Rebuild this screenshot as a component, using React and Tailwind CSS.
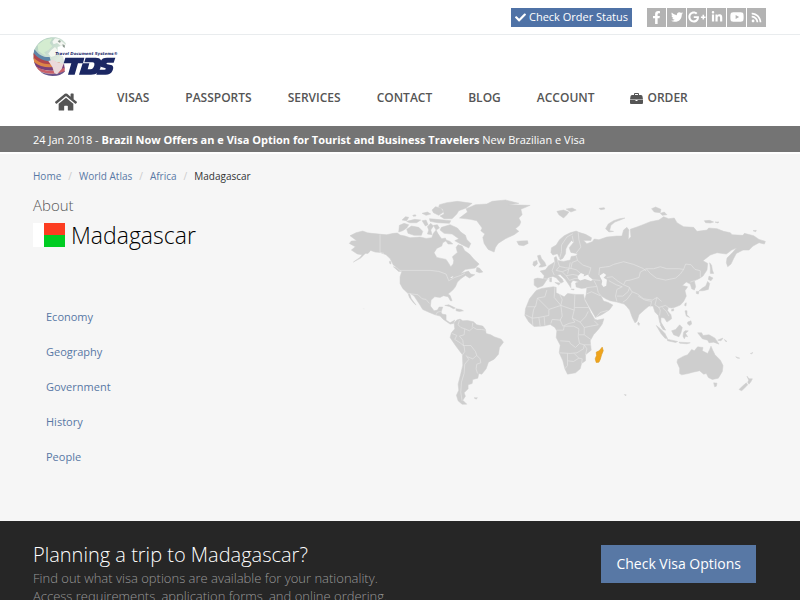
import React from "react";
import {
  FaCheck,
  FaFacebookF,
  FaTwitter,
  FaGooglePlusG,
  FaLinkedinIn,
  FaYoutube,
  FaRss,
  FaHome,
} from "react-icons/fa";

// Each region of the map is plotted on its own sheet; a sheet has an offset on the world grid.
const SHEETS = {
  world: [0, 0],
  atlantic: [390, 0],
  siberia: [780, 0],
  south: [270, 300],
  pacific: [810, 270],
  central: [150, 240],
  europe: [540, 105],
};

function outline(...parts) {
  const points = [];
  for (const [sheet, coords] of parts) {
    const [dx, dy] = SHEETS[sheet];
    for (const pair of coords.split(" ")) {
      const [x, y] = pair.split(",").map(Number);
      points.push(`${x + dx} ${y + dy}`);
    }
  }
  return "M" + points.join("L");
}

const NORTH_AMERICA = outline(
  ["world", "30,137 48,128 68,123 82,128 95,130 125,133 140,134 160,130 172,129 180,135 195,138 210,143 240,141 258,145 275,143 280,130 288,120 293,130 300,140 305,146 316,144 318,152 308,158 305,168 290,175 282,188 290,202 318,208 326,220 332,230 339,222 341,212 337,200 352,187 348,172 354,164 366,168 374,182 388,192 402,208 417,222 405,234 375,238 362,250 385,243 392,252 404,254 388,264 376,256 362,266 352,276 346,290 338,300 324,312"],
  ["central", "180,76 186,92 181,92 174,80 160,77 150,82 134,80 123,90 121,108 132,122 142,120 147,111 158,111 153,126 156,132 168,134 168,150 180,158 194,150 190,160 180,162 160,148 150,138 135,134 120,128 98,118 88,102 72,78 58,68 64,86 78,105 70,98 58,82 54,70 38,55 30,40 30,20 35,5"],
  ["world", "172,234 160,225 150,205 138,194 120,187 105,186 92,181 84,190 76,190 62,204 40,216 60,202 66,194 52,192 34,180 46,170 28,160 34,153 50,152"]
);

const SOUTH_AMERICA = outline([
  "south",
  "72,98 80,90 90,87 98,92 112,91 130,95 140,104 158,108 166,118 168,130 182,134 192,140 213,147 220,156 208,172 205,192 192,207 175,216 168,236 155,252 146,250 143,264 128,268 126,280 114,284 114,296 102,308 106,318 98,330 110,342 96,342 84,332 79,315 86,300 84,282 91,255 98,225 97,194 85,178 72,160 60,142 64,128 74,116",
]);

const AFRICA = outline([
  "south",
  "318,1 335,-5 370,-10 378,-8 378,8 386,12 402,20 412,10 436,13 460,13 463,30 474,50 482,68 494,88 502,90 521,86 516,102 506,116 490,134 480,152 483,180 466,194 466,212 454,220 450,236 436,248 412,252 404,236 398,212 387,188 390,165 378,142 380,122 374,112 360,103 340,108 312,109 296,96 284,76 286,56 298,26",
]);

const EURASIA = outline(
  ["europe", "42,162 52,159 70,162 72,152 60,138 76,134 85,122 95,116 104,110 102,98 108,94 112,106 130,109 150,105 153,94 168,92 172,86 152,82 147,68 160,52 154,46 143,60 137,72 136,86 128,100 120,104 112,86 98,90 92,82 94,68 108,60 118,44 132,32 150,23 168,18 176,22 196,28 214,38 212,46 190,46 200,56 216,50 222,42 236,44 260,36 290,33"],
  ["siberia", "65,138 70,120 80,112 86,120 84,148 92,140 90,118 112,110 128,104 150,95 176,90 190,80 205,86 222,84 230,98 250,110 280,112 290,124 320,120 325,114 350,116 370,124 390,128 395,134 428,136 432,130 460,137 476,148 495,154 492,162 476,158 458,168 446,180 428,180 408,190 400,205 392,222 382,230 378,218 380,204 398,186 408,174 394,180 378,192 350,188 330,195 308,212 322,220 320,240 308,258 296,266 282,272 286,290 282,300 274,296 270,282 258,276 246,286 262,290 254,302 258,318 250,334 240,345 222,352"],
  ["pacific", "184,84 174,82 172,92 182,104 184,116 170,126 162,114 152,112 152,126 160,140 165,150 156,144 148,126 144,106 134,96 128,78 116,78 106,86 86,104 80,124 74,128 66,112 58,90 50,80 42,72 20,66 0,62"],
  ["europe", "258,222 242,212 250,228 264,232 278,240 268,254 246,268 226,277 216,260 204,240 194,222 198,208 200,188 184,190 168,186 166,174 176,170 158,166 152,174 152,188 144,176 136,164 120,148 112,150 126,162 130,170 122,174 108,158 98,154 84,158 76,170 68,182 52,188 42,180"]
);

const ISLANDS = [
  // Greenland and Iceland
  outline(["atlantic", "-32,84 -8,66 -12,56 16,44 50,42 66,34 106,30 146,40 116,44 180,46 152,58 156,74 146,84 152,96 148,106 136,116 146,124 132,134 106,146 84,160 76,172 72,186 54,178 42,160 38,142 44,132 32,122 36,114 20,92 0,88"]),
  outline(["atlantic", "140,154 150,153 172,152 174,160 160,167 146,165"]),
  // Canadian Arctic
  outline(["world", "298,44 320,38 352,34 396,40 378,54 356,62 350,72 336,86 312,86 300,78 312,72 308,58 296,50"]),
  outline(["world", "276,60 286,50 302,54 310,66 296,76 280,68"]),
  outline(["world", "268,86 290,88 332,92 328,100 292,98 270,94"]),
  outline(["world", "304,112 330,104 352,114 362,126 376,136 380,148 392,160 386,174 366,164 344,152 356,146 336,132 312,130 300,120"]),
  outline(["world", "176,126 178,106 192,100 206,104 200,114 188,122"]),
  outline(["world", "200,118 214,108 236,112 248,124 244,136 222,136 204,130"]),
  outline(["world", "200,94 224,88 242,90 230,98 208,98"]),
  outline(["world", "186,90 196,80 206,82 200,92"]),
  outline(["world", "246,92 258,90 264,104 256,108"]),
  outline(["world", "262,110 272,100 280,108 272,120 276,134 262,132 266,120"]),
  outline(["world", "280,106 292,104 298,114 288,120"]),
  outline(["world", "246,70 262,66 272,72 258,76"]),
  outline(["world", "218,76 226,74 228,78 220,79"]),
  outline(["world", "314,148 330,154 338,162 324,162"]),
  outline(["world", "410,232 418,234 428,246 418,248 408,244"]),
  outline(["world", "160,230 168,232 182,244 176,244"]),
  outline(["world", "148,214 152,214 153,222 149,220"]),
  // Caribbean
  outline(["central", "164,106 176,104 196,114 190,116 178,109"]),
  outline(["central", "198,116 212,118 220,122 208,124 198,122"]),
  // British Isles
  outline(["europe", "52,92 60,90 64,100 74,112 78,122 66,126 56,126 62,118 56,108"]),
  outline(["europe", "40,110 50,106 52,116 44,124 38,120"]),
  // Svalbard and the Russian Arctic
  outline(["atlantic", "260,64 280,60 296,66 290,74 280,84 266,74"]),
  outline(["atlantic", "288,57 306,54 318,60 302,66"]),
  outline(["atlantic", "386,55 402,53 404,57 392,59"]),
  outline(["siberia", "16,116 24,102 40,92 58,86 74,84 60,90 44,96 32,106 28,122 40,124 26,126"]),
  outline(["siberia", "154,56 166,51 182,58 180,68 162,66"]),
  outline(["siberia", "180,70 192,66 200,74 186,76"]),
  outline(["siberia", "312,92 328,91 340,96 330,99 316,98"]),
  outline(["siberia", "344,96 356,96 352,99"]),
  outline(["siberia", "458,122 468,121 466,125"]),
  // Mediterranean
  outline(["europe", "104,172 120,174 116,180"]),
  outline(["europe", "88,160 94,158 94,170 89,170"]),
  outline(["europe", "152,192 162,192 160,195"]),
  // Japan and Sakhalin
  outline(["siberia", "328,218 334,226 336,240 340,250 330,250 330,234"]),
  outline(["siberia", "326,258 338,264 332,272 324,268"]),
  outline(["siberia", "322,274 328,280 324,298 308,302 296,302 306,294 316,288"]),
  outline(["siberia", "288,304 296,304 294,312 288,310"]),
  // South-east Asia
  outline(["pacific", "84,126 88,130 86,136 82,132"]),
  outline(["pacific", "184,88 190,86 190,92 184,93"]),
  outline(["pacific", "224,70 228,68 227,78 223,76"]),
  outline(["pacific", "224,92 230,92 230,104 238,112 228,108"]),
  outline(["pacific", "232,126 242,122 244,132 238,136 232,132"]),
  outline(["pacific", "138,136 150,146 164,160 172,176 164,174 152,160"]),
  outline(["pacific", "150,134 158,138 166,150 158,148"]),
  outline(["pacific", "170,177 184,180 202,184 196,187 172,182"]),
  outline(["pacific", "184,152 196,148 208,134 216,142 212,158 206,170 190,164"]),
  outline(["pacific", "220,156 224,152 234,152 226,160 232,170 226,168 222,176 218,168"]),
  outline(["pacific", "206,186 222,187 240,188 230,191 208,189"]),
  outline(["pacific", "262,158 274,158 278,166 296,164 314,174 326,192 310,186 296,188 292,180 276,176"]),
  outline(["pacific", "322,180 332,176 338,174 332,182"]),
  outline(["pacific", "342,178 350,184 346,184"]),
  // Australia and New Zealand
  outline(["pacific", "202,238 220,228 232,224 244,208 252,212 262,200 278,202 276,212 292,220 298,208 302,198 308,212 314,224 330,240 338,256 336,274 324,294 306,298 294,292 288,280 280,282 268,272 248,276 234,280 214,284 208,280 208,264 200,246"]),
  outline(["pacific", "310,308 320,309 318,318 313,320"]),
  outline(["pacific", "410,288 416,296 426,296 422,304 416,312 412,306 415,300"]),
  outline(["pacific", "408,308 412,314 402,324 394,332 386,328 396,318"]),
  outline(["pacific", "376,230 388,234 382,234"]),
  outline(["pacific", "420,220 428,217 424,221"]),
  outline(["pacific", "42,343 48,344 46,347"]),
  outline(["south", "132,323 142,323 138,327"]),
];

const WATER = [
  outline(["europe", "174,162 172,154 182,144 192,148 190,154 204,148 206,154 218,164 212,168 194,162 180,166"]),
  outline(["europe", "238,152 250,144 258,150 250,158 260,164 258,182 250,186 244,178 246,168"]),
  outline(["world", "330,262 340,258 336,264"]),
];

const BORDERS = [
  outline(["world", "120,133 120,187 132,190"]),
  outline(["world", "180,241 270,241 296,244 318,252 326,272 344,262 362,256 374,250"]),
  outline(["central", "54,70 68,72 84,74 96,86 108,88 118,100"]),
  outline(["central", "138,134 142,126 152,124"]),
  outline(["south", "88,90 84,104 92,112 104,116 102,134 88,138 98,150 100,166 122,166 136,184 140,196 150,206 152,218 140,222 138,236 142,250"]),
  outline(["south", "66,130 80,136 74,148 90,158 102,168 104,184 96,196"]),
  outline(["south", "104,116 118,122 130,112 140,118 154,118 166,120"]),
  outline(["south", "108,196 116,208 104,222 102,250 94,276 92,306 96,332"]),
  outline(["south", "112,200 128,206 140,196"]),
  outline(["south", "128,98 126,112"]),
  outline(["south", "292,50 316,50 322,24 344,20 350,0"]),
  outline(["south", "322,24 356,58 392,46 372,22 374,-8"]),
  outline(["south", "392,46 396,28 388,12"]),
  outline(["south", "392,46 432,60 434,14"]),
  outline(["south", "434,52 476,52"]),
  outline(["south", "392,46 396,78 390,90 366,88 362,100"]),
  outline(["south", "432,60 426,84 434,96 416,100 398,108 390,90"]),
  outline(["south", "356,58 356,76 326,82 306,84 310,60 314,50"]),
  outline(["south", "286,74 306,84 308,106"]),
  outline(["south", "326,82 330,108"]),
  outline(["south", "342,80 344,106"]),
  outline(["south", "426,84 450,96 466,80 474,64"]),
  outline(["south", "450,96 462,112 482,108 504,104 492,92"]),
  outline(["south", "380,120 400,120 402,108 430,108 446,116 444,140 448,160 436,172 420,160 418,154 390,152"]),
  outline(["south", "446,134 462,134 482,148"]),
  outline(["south", "462,112 462,134"]),
  outline(["south", "448,160 462,164 482,164"]),
  outline(["south", "388,188 420,190 440,188 460,176 462,164"]),
  outline(["south", "412,190 412,226 404,236"]),
  outline(["south", "412,212 430,214 446,204 432,190"]),
  outline(["south", "446,204 456,206 454,220"]),
  outline(["south", "462,164 470,176 466,194"]),
  outline(["europe", "118,100 124,80 124,60 140,36 158,26"]),
  outline(["europe", "174,22 176,44 182,66 168,84"]),
  outline(["europe", "160,52 156,32"]),
  outline(["europe", "168,92 172,106 188,120 212,128 206,148"]),
  outline(["europe", "104,110 100,126 96,136 102,150"]),
  outline(["europe", "72,161 90,163"]),
  outline(["europe", "112,106 118,124 108,136 126,140 146,132 150,112"]),
  outline(["europe", "118,124 136,128 152,130 156,112 172,106"]),
  outline(["europe", "152,130 168,134 180,144"]),
  outline(["europe", "126,140 138,152 148,166 164,160 174,160"]),
  outline(["europe", "138,152 158,148 176,152"]),
  outline(["europe", "146,132 142,146"]),
  outline(["europe", "218,164 240,166"]),
  outline(["europe", "222,168 230,184 198,188"]),
  outline(["europe", "230,184 234,202 244,214"]),
  outline(["europe", "200,206 214,200 240,212"]),
  outline(["europe", "228,276 240,262 262,256"]),
  outline(["europe", "236,150 238,128 268,124 280,118 310,110 340,118 368,130 378,138"]),
  outline(["siberia", "138,236 160,236 180,230 200,236 236,236 250,238 256,222 272,224 284,238 300,242 300,262"]),
  outline(["siberia", "138,236 150,250 168,264 196,270 226,264 240,252 250,238"]),
  outline(["siberia", "138,236 120,246 116,262 90,270 76,272 70,284 88,292 94,304 112,312 130,326 156,330 170,322 184,334"]),
  outline(["siberia", "20,262 36,260 54,274 70,284"]),
  outline(["siberia", "26,272 48,284 66,290 50,298 46,318 50,334"]),
  outline(["siberia", "50,318 68,318 84,304 88,292"]),
  outline(["siberia", "68,336 80,328 96,306"]),
  outline(["siberia", "114,318 134,330 154,334 150,352"]),
  outline(["siberia", "170,322 164,344 176,352 196,346 206,354"]),
  outline(["pacific", "144,80 150,90 148,106"]),
  outline(["pacific", "156,82 168,94 176,108"]),
  outline(["siberia", "270,276 282,272"]),
];

const MADAGASCAR = outline(["south", "516,171 519,182 514,194 510,208 506,216 498,217 495,206 499,196 498,186 507,182"]);

function WorldMap() {
  return (
    <svg viewBox="0 0 1320 690" className="block w-full" role="img" aria-label="World map">
      <g fill="#cecece" stroke="#cecece" strokeWidth="1.5" strokeLinejoin="round">
        <path d={NORTH_AMERICA + "Z"} />
        <path d={SOUTH_AMERICA + "Z"} />
        <path d={AFRICA + "Z"} />
        <path d={EURASIA + "Z"} />
        {ISLANDS.map((d) => (
          <path key={d} d={d + "Z"} />
        ))}
        <path d="M68 354 74 356 72 359Z" fill="#ebebeb" stroke="none" />
      </g>
      {WATER.map((d) => (
        <path key={d} d={d + "Z"} fill="#f6f6f6" />
      ))}
      <g fill="none" stroke="#e6e6e6" strokeWidth="2" strokeLinejoin="round">
        {BORDERS.map((d) => (
          <path key={d} d={d} />
        ))}
      </g>
      <path d={MADAGASCAR + "Z"} fill="#efa41c" stroke="#dc9c24" strokeWidth="2" strokeLinejoin="round" />
    </svg>
  );
}

function Logo() {
  return (
    <svg viewBox="0 0 270 120" className="block h-10 w-[90px]" role="img" aria-label="Travel Document Systems">
      <defs>
        <clipPath id="globe">
          <path d="M62 1C28 0 1 26 1 58c0 34 26 59 58 59 16 0 28-5 36-13V82l-5-24-16-8V30l26-8C92 8 78 1 62 1Z" />
        </clipPath>
        <linearGradient id="sea" x1="0" y1="0" x2="1" y2="1">
          <stop offset="0" stopColor="#a5c8b8" />
          <stop offset="0.6" stopColor="#dfeadf" />
          <stop offset="1" stopColor="#c9cde0" />
        </linearGradient>
      </defs>
      <g clipPath="url(#globe)">
        <rect width="120" height="120" fill="url(#sea)" />
        <path d="M14 24 34 8 58 4 50 18 58 28 46 40 34 46 40 56 28 50 16 42Z" fill="#d4ecd0" />
        <path d="M4 36C18 56 34 62 50 60L54 74C36 78 14 66 0 52Z" fill="#5f86a8" />
        <path d="M0 46C14 66 36 76 60 72L80 78C60 94 20 86 0 66Z" fill="#b0464c" />
        <path d="M0 60C22 84 52 86 80 76L78 88C48 98 18 92 2 76Z" fill="#dd8548" />
        <path d="M2 74C26 94 60 96 92 80L96 94C60 106 26 102 6 88Z" fill="#7a3f78" />
        <path d="M8 88C34 104 60 106 96 92V104C60 114 34 112 16 100Z" fill="#c8606a" />
        <path d="M18 102C40 114 70 114 96 102V120H30Z" fill="#6a548c" />
        <path d="M46 72 60 68 74 76 92 80 86 96 72 112 64 108 58 90Z" fill="#ead9da" />
        <path d="M54 40 66 30 74 40 66 56 54 60 46 50Z" fill="#f4f7f0" />
      </g>
      <path d="M66 4 80 6 76 14 84 12 92 18 98 24 92 30 88 24 84 28 78 22 72 18 62 22 58 14Z" fill="#f4f6f2" />
      <path d="M74 12 80 10 84 15 79 17ZM88 22 95 24 96 32 90 30Z" fill="#8f9c92" />
      <text x="67" y="55" className="fill-[#1d2a6b] font-['DejaVu_Sans',sans-serif] text-[12px] font-bold italic">
        Travel Document Systems®
      </text>
      <g fill="#1b2763">
        <path d="M97 62H154L150 79H135L125 113H105L115 79H92Z" />
        <path fillRule="evenodd" d="M158 62H188C204 62 208 72 204 86 200 104 192 113 174 113H138L149 79H169L164 97H172C180 97 182 92 184 85 185 79 184 76 178 76H154Z" />
        <path d="M247 62 242 77H224C220 77 219 81 223 82L234 84C242 86 242 94 238 102 234 110 228 113 218 113H190L195 98H214C219 98 220 94 216 93L208 91C199 89 200 80 203 73 206 65 212 62 222 62Z" />
      </g>
    </svg>
  );
}

function Briefcase() {
  return (
    <svg viewBox="0 0 26 22" className="h-[11px] w-[13px]" fill="currentColor" aria-hidden="true">
      <path d="M8 4V2a2 2 0 0 1 2-2h6a2 2 0 0 1 2 2v2h4a3 3 0 0 1 3 3l1 6H0L1 7a3 3 0 0 1 3-3Zm2 0h6V2h-6Z" fillRule="evenodd" />
      <path d="M0 14h11v2h4v-2h11v6a2 2 0 0 1-2 2H2a2 2 0 0 1-2-2Z" />
    </svg>
  );
}

const SOCIAL = [
  ["Facebook", FaFacebookF, "size-[13px]"],
  ["Twitter", FaTwitter, "size-3"],
  ["Google Plus", FaGooglePlusG, "size-[18px]"],
  ["LinkedIn", FaLinkedinIn, "size-3"],
  ["YouTube", FaYoutube, "size-[14px]"],
  ["RSS", FaRss, "size-[11px]"],
];

const NAV = ["VISAS", "PASSPORTS", "SERVICES", "CONTACT", "BLOG", "ACCOUNT"];
const TOPICS = ["Economy", "Geography", "Government", "History", "People"];

export default function App() {
  return (
    <div className="min-h-screen bg-[#f6f6f6] font-['Open_Sans',sans-serif] text-[#333]">
      <div className="flex h-[35px] items-center justify-end gap-[15px] border-b border-[#e9ecee] bg-white pr-[34px]">
        <a href="#status" className="flex h-[19px] items-center gap-[3px] bg-[#4f72a6] px-1 pt-px text-[11px] text-white">
          <FaCheck className="size-[11px]" />
          Check Order Status
        </a>
        <div className="flex gap-px">
          {SOCIAL.map(([name, Icon, size]) => (
            <a key={name} href="#social" aria-label={name} className="grid h-[19px] w-[19px] place-items-center bg-[#b3b3b3] text-white">
              <Icon className={size} />
            </a>
          ))}
        </div>
      </div>

      <header className="bg-white pt-[2px]">
        <a href="#home" className="ml-[33px] block w-[90px]">
          <Logo />
        </a>
        <nav className="flex h-[49px] items-start gap-9 pl-[55px] pt-3 text-xs leading-[18px] font-semibold text-[#555]">
          <a href="#home" aria-label="Home" className="mr-1 pt-[2px]">
            <FaHome className="size-[22px]" />
          </a>
          {NAV.map((item) => (
            <a key={item} href="#nav">{item}</a>
          ))}
          <a href="#order" className="flex items-center gap-1">
            <Briefcase />
            ORDER
          </a>
        </nav>
      </header>

      <div className="h-[26px] bg-[#747474] px-[33px] text-[11px] leading-7 text-white">
        24 Jan 2018 - <a href="#news"><strong>Brazil Now Offers an e Visa Option for Tourist and Business Travelers</strong> New Brazilian e Visa</a>
      </div>

      <main className="border-t-2 border-white px-[33px] pb-[47px]">
        <nav aria-label="Breadcrumb" className="flex gap-[7px] pt-3 text-[10px] leading-5">
          <a href="#home" className="text-[#5878a5]">Home</a>
          <span className="text-[#ccc]">/</span>
          <a href="#atlas" className="text-[#5878a5]">World Atlas</a>
          <span className="text-[#ccc]">/</span>
          <a href="#africa" className="text-[#5878a5]">Africa</a>
          <span className="text-[#ccc]">/</span>
          <span>Madagascar</span>
        </nav>
        <div className="flex pt-1">
          <div className="flex-1">
            <h1 className="pt-[5px] text-[#555]">
              <span className="block text-[15px] font-light leading-5">About</span>
              <span className="flex items-center gap-[6px] text-[23px] font-light leading-10 text-black">
                <svg viewBox="0 0 32 24" className="h-6 w-8" aria-hidden="true">
                  <rect width="32" height="24" fill="#fff" />
                  <rect x="11" width="21" height="12" fill="#fc3d21" />
                  <rect x="11" y="12" width="21" height="12" fill="#0c2" />
                </svg>
                Madagascar
              </span>
            </h1>
            <ul className="pt-11 pl-[13px] text-[11px] leading-[35px]">
              {TOPICS.map((topic) => (
                <li key={topic}>
                  <a href="#topic" className="text-[#5878a5]">{topic}</a>
                </li>
              ))}
            </ul>
          </div>
          <div className="-mr-[13px] w-3/5">
            <WorldMap />
          </div>
        </div>
      </main>

      <footer className="flex items-start justify-between bg-[#262626] pr-11 pl-[33px] pt-6">
        <div className="font-light">
          <h2 className="text-xl leading-5 text-white">Planning a trip to Madagascar?</h2>
          <p className="pt-1 text-[13px] leading-[18px] text-[#999]">
            Find out what visa options are available for your nationality.
            <br />
            Access requirements, application forms, and online ordering.
          </p>
        </div>
        <a href="#visa" className="bg-[#5878a5] px-[15px] text-sm leading-[38px] text-white">Check Visa Options</a>
      </footer>
    </div>
  );
}
